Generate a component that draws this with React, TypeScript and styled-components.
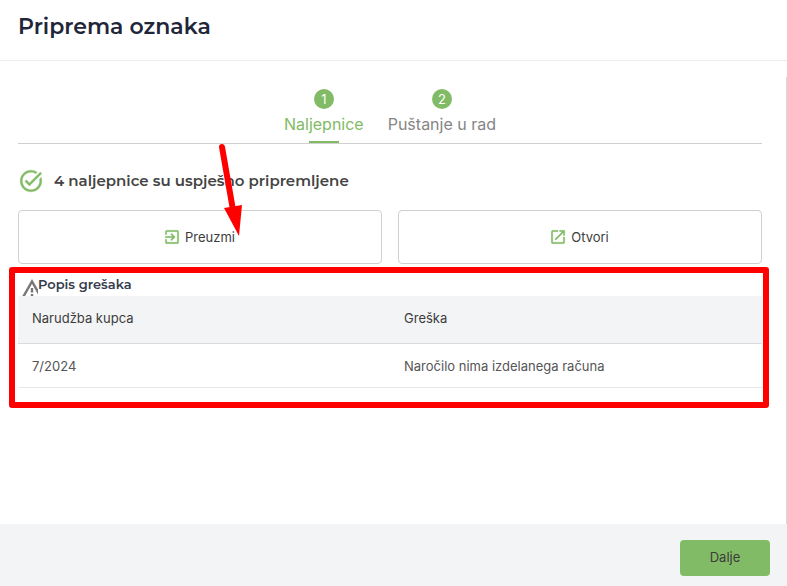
import React from "react";
import styled, { createGlobalStyle } from "styled-components";

const green = "#82bb65";
const body = '"Inter", "Liberation Sans", sans-serif';
const heading = '"Montserrat", "Inter", "Liberation Sans", sans-serif';

const GlobalStyle = createGlobalStyle`
  *, *::before, *::after { box-sizing: border-box; }
  body { margin: 0; background: #fff; color: #3c3c3c; font: 400 13px/20px ${body}; }
  button { font: inherit; color: inherit; cursor: pointer; }
`;

const Page = styled.div`
  display: flex;
  flex-direction: column;
  min-height: 100vh;
`;

const Header = styled.header`
  padding: 11px 18px 17px;
  border-bottom: 1px solid #ececec;
`;

const Title = styled.h1`
  margin: 0;
  font: 600 22px/32px ${heading};
  color: #1f263a;
`;

const Content = styled.main`
  flex: 1;
  margin-top: 16px;
  padding: 12px 24px 0 18px;
  border-right: 1px solid #d9d9d9;
`;

const Tabs = styled.nav`
  display: flex;
  justify-content: center;
  gap: 24px;
  border-bottom: 1px solid #d0d0d0;
`;

const Tab = styled.button<{ $active?: boolean }>`
  display: flex;
  flex-direction: column;
  align-items: center;
  padding: 0;
  border: 0;
  background: none;
  font-size: 16px;
  line-height: 30px;
  color: ${(p) => (p.$active ? green : "#858585")};

  &::after {
    content: "";
    width: 30px;
    height: 2px;
    margin-top: 2px;
    background: ${(p) => (p.$active ? green : "transparent")};
  }
`;

const StepNumber = styled.span`
  width: 20px;
  height: 20px;
  border-radius: 50%;
  background: ${green};
  color: #fff;
  font-size: 13px;
  line-height: 20px;
`;

const Status = styled.div`
  display: flex;
  align-items: center;
  gap: 10px;
  padding: 24px 0 16px;
  font: 600 15px/26px ${heading};
  color: #444;
`;

const Actions = styled.div`
  display: grid;
  grid-template-columns: 1fr 1fr;
  gap: 16px;
`;

const ActionButton = styled.button`
  display: flex;
  align-items: center;
  justify-content: center;
  gap: 4px;
  height: 54px;
  padding: 0 8px 0 6px;
  border: 1px solid #d0d0d0;
  border-radius: 4px;
  background: #fff;
`;

const ErrorSection = styled.section`
  margin: 3px -7px 0 -9px;
  padding: 4px 1px 14px 3px;
  border: 6px solid #f00;
  border-radius: 3px;
`;

const ErrorTitle = styled.h2`
  display: flex;
  align-items: flex-start;
  height: 19px;
  margin: 0;
  padding-left: 4px;
  font: 600 13px/14px ${heading};
  color: #353c4c;
`;

const WarningClip = styled.span`
  flex: none;
  width: 16px;
  height: 19px;
  padding-top: 2px;
  overflow: hidden;
`;

const WarningIcon = styled.svg`
  display: block;
  width: 20px;
  height: 20px;
`;

const ErrorTable = styled.table`
  width: 100%;
  border-collapse: separate;
  border-spacing: 0;
  table-layout: fixed;
  text-align: left;
`;

const HeadCell = styled.th`
  height: 48px;
  padding: 0 14px 3px;
  border-bottom: 1px solid #d9dadd;
  background: #f3f4f6;
  font-weight: 400;
`;

const Cell = styled.td`
  height: 44px;
  padding: 0 14px;
  border-bottom: 1px solid #e8e8e8;
  color: #555;
`;

const Footer = styled.footer`
  display: flex;
  justify-content: flex-end;
  padding: 16px 17px 10px;
  background: #f3f4f6;
`;

const NextButton = styled.button`
  min-width: 90px;
  height: 36px;
  padding: 0 16px 2px;
  border: 0;
  border-radius: 4px;
  background: ${green};
`;

const Arrow = styled.svg`
  position: absolute;
  left: 216px;
  top: 142px;
  pointer-events: none;
`;

export default function App() {
  return (
    <Page>
      <GlobalStyle />
      <Header>
        <Title>Priprema oznaka</Title>
      </Header>
      <Content>
        <Tabs>
          <Tab type="button" $active>
            <StepNumber>1</StepNumber>Naljepnice
          </Tab>
          <Tab type="button">
            <StepNumber>2</StepNumber>Puštanje u rad
          </Tab>
        </Tabs>
        <Status>
          <svg width="26" height="26" viewBox="0 0 24 24" fill={green} stroke={green} strokeWidth="0.3" aria-hidden="true">
            <path d="M22 5.18 10.59 16.6l-4.24-4.24 1.41-1.41 2.83 2.83 10-10L22 5.18zM19.79 10.22C19.92 10.79 20 11.39 20 12c0 4.42-3.58 8-8 8s-8-3.58-8-8 3.58-8 8-8c1.58 0 3.04.46 4.28 1.25l1.44-1.44C16.1 2.67 14.13 2 12 2 6.48 2 2 6.48 2 12s4.48 10 10 10 10-4.48 10-10c0-1.19-.22-2.33-.6-3.39l-1.61 1.61z" />
          </svg>
          4 naljepnice su uspješno pripremljene
        </Status>
        <Actions>
          <ActionButton type="button">
            <svg width="18" height="18" viewBox="0 0 24 24" fill={green} stroke={green} strokeWidth="0.3" aria-hidden="true">
              <path d="M10.09 15.59 11.5 17l5-5-5-5-1.41 1.41L12.67 11H3v2h9.67l-2.58 2.59zM19 3H5a2 2 0 0 0-2 2v4h2V5h14v14H5v-4H3v4a2 2 0 0 0 2 2h14c1.1 0 2-.9 2-2V5c0-1.1-.9-2-2-2z" />
            </svg>
            Preuzmi
          </ActionButton>
          <ActionButton type="button">
            <svg width="18" height="18" viewBox="0 0 24 24" fill={green} stroke={green} strokeWidth="0.3" aria-hidden="true">
              <path d="M19 19H5V5h7V3H5a2 2 0 0 0-2 2v14a2 2 0 0 0 2 2h14c1.1 0 2-.9 2-2v-7h-2v7zM14 3v2h3.59l-9.83 9.83 1.41 1.41L19 6.41V10h2V3h-7z" />
            </svg>
            Otvori
          </ActionButton>
        </Actions>
        <ErrorSection>
          <ErrorTitle>
            <WarningClip>
              <WarningIcon viewBox="0 0 20 20" fill="none" stroke="#777" strokeWidth="2.4" aria-hidden="true">
                <path d="M0 20 10 2.500l10 17.500M10 9v4.500M10 15v2.400" />
              </WarningIcon>
            </WarningClip>
            Popis grešaka
          </ErrorTitle>
          <ErrorTable>
            <thead>
              <tr>
                <HeadCell scope="col">Narudžba kupca</HeadCell>
                <HeadCell scope="col">Greška</HeadCell>
              </tr>
            </thead>
            <tbody>
              <tr>
                <Cell>7/2024</Cell>
                <Cell>Naročilo nima izdelanega računa</Cell>
              </tr>
            </tbody>
          </ErrorTable>
        </ErrorSection>
      </Content>
      <Footer>
        <NextButton type="button">Dalje</NextButton>
      </Footer>
      <Arrow width="30" height="96" viewBox="0 0 30 96" aria-hidden="true">
        <path d="M6 5 17 68" stroke="#f00" strokeWidth="6" strokeLinecap="round" />
        <path d="M8 66 26 63 23 94z" fill="#f00" />
      </Arrow>
    </Page>
  );
}
